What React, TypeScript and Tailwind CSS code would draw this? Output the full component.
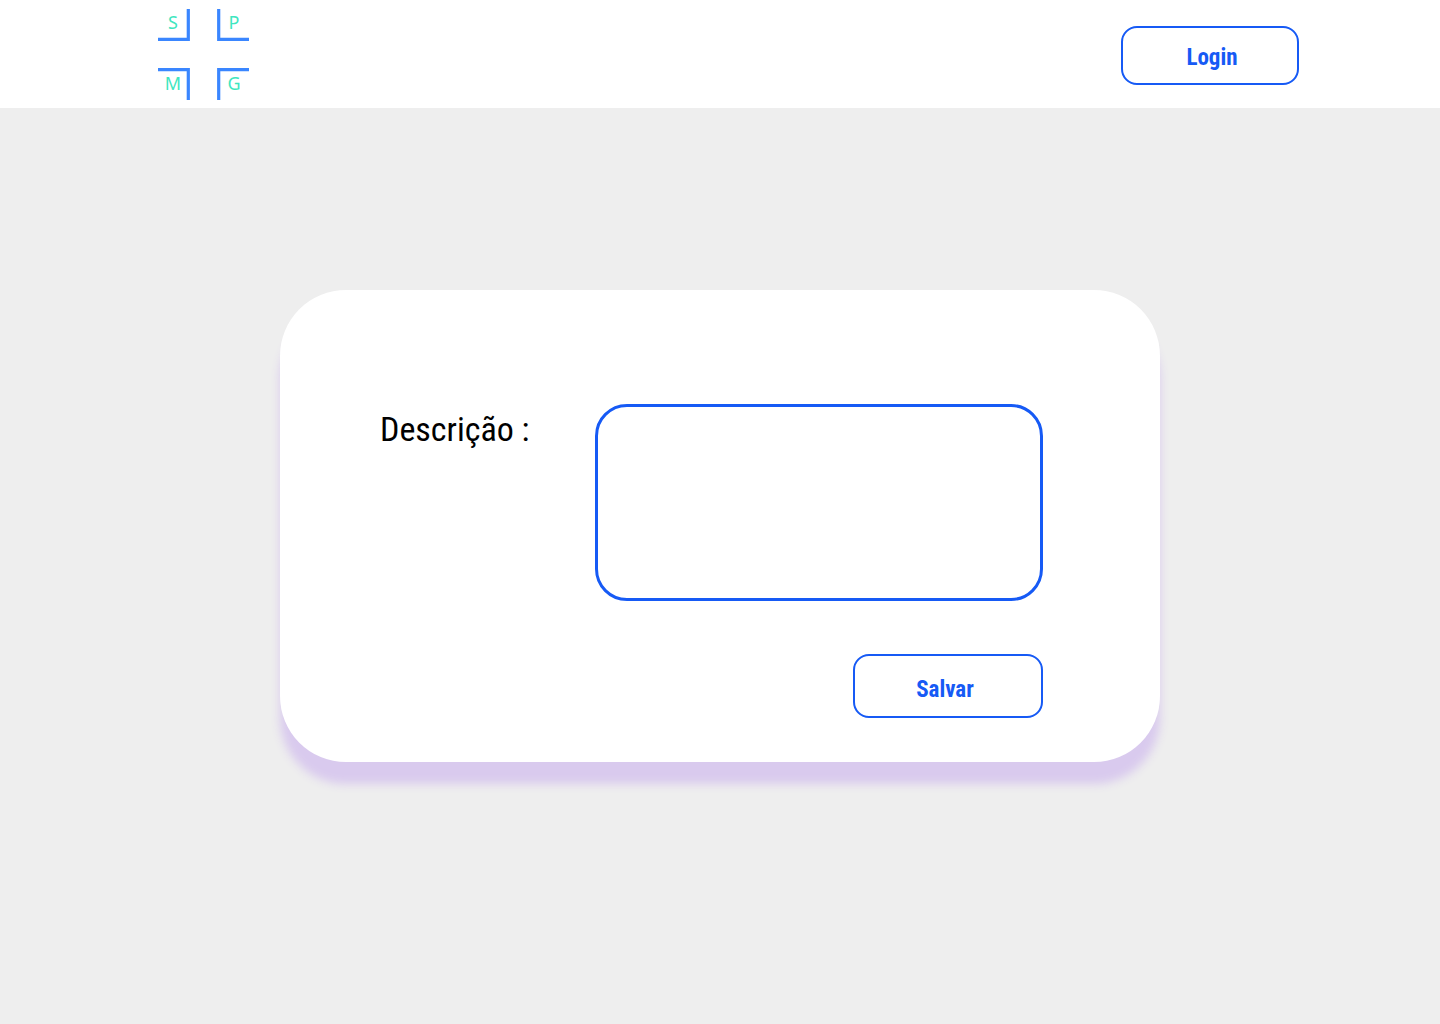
export default function App() {
  return (
    <div className="flex min-h-screen flex-col bg-[#eeeeee] font-['Roboto_Condensed','Roboto',sans-serif]">
      <header className="flex items-center justify-between bg-white pt-[9px] pr-[141px] pb-[7px] pl-[158px]">
        <a href="#" aria-label="SPMG">
          <svg width="92" height="92" viewBox="0 0 92 92" fill="none">
            <g stroke="#3a86ff" strokeWidth="3.2">
              <path d="M0 30.3H30.3V0" />
              <path d="M91 30.3H60.7V0" />
              <path d="M0 60.7H30.3V91" />
              <path d="M91 60.7H60.7V91" />
            </g>
            <g fill="#3fe6c0" fontFamily="Noto Sans, sans-serif" fontSize="18" textAnchor="middle">
              <text x="15" y="20">S</text>
              <text x="76" y="20">P</text>
              <text x="15" y="81">M</text>
              <text x="76" y="81">G</text>
            </g>
          </svg>
        </a>
        <button type="button" className="w-[178px] rounded-2xl border-2 border-[#165af5] pt-[14px] pr-0 pb-[9px] pl-1 text-[23px] leading-8 font-bold text-[#165af5]">
          Login
        </button>
      </header>
      <main className="flex flex-1 items-start justify-center pt-[182px]">
        <form className="w-full max-w-[880px] rounded-[66px] bg-white pt-[114px] pr-[117px] pb-11 pl-[100px] shadow-[0_22px_10px_#d9caee]">
          <div className="flex items-start justify-between gap-4">
            <label htmlFor="descricao" className="pt-1 text-[34px] leading-[42px] text-black">
              Descrição :
            </label>
            <textarea
              id="descricao"
              className="h-[197px] w-full max-w-[448px] resize-none rounded-[32px] border-3 border-[#165af5] p-5 text-2xl outline-none"
            />
          </div>
          <div className="mt-[53px] flex justify-end">
            <button type="button" className="h-16 w-[190px] rounded-2xl border-2 border-[#165af5] pt-2 pr-[6px] text-[23px] leading-8 font-bold text-[#165af5]">
              Salvar
            </button>
          </div>
        </form>
      </main>
    </div>
  );
}
